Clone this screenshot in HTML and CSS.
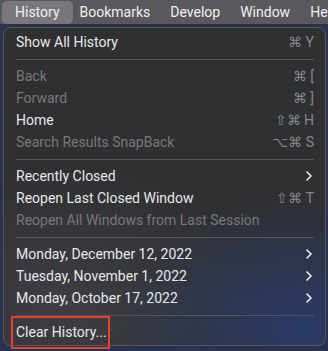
FILE: index.html
```html
<!DOCTYPE html>
<html lang="en">
  <head>
    <meta charset="UTF-8" />
    <title>History menu</title>
    <link rel="stylesheet" href="styles.css">
  </head>
  <body>
    <div class="menubar">
      <span class="top active">History</span>
      <span class="top">Bookmarks</span>
      <span class="top">Develop</span>
      <span class="top">Window</span>
      <span class="top">Help</span>
    </div>
    <div class="desk">
      <div class="menu">
        <div class="item"><span>Show All History</span><span class="key">⌘ Y</span></div>
        <div class="sep"></div>
        <div class="item off"><span>Back</span><span class="key">⌘ [</span></div>
        <div class="item off"><span>Forward</span><span class="key">⌘ ]</span></div>
        <div class="item"><span>Home</span><span class="key">⇧⌘ H</span></div>
        <div class="item off"><span>Search Results SnapBack</span><span class="key">⌥⌘ S</span></div>
        <div class="sep"></div>
        <div class="item"><span>Recently Closed</span><svg class="arrow" viewBox="0 0 6 10"><path d="M1 1l4 4-4 4"/></svg></div>
        <div class="item"><span>Reopen Last Closed Window</span><span class="key">⇧⌘ T</span></div>
        <div class="item off"><span>Reopen All Windows from Last Session</span></div>
        <div class="sep"></div>
        <div class="item"><span>Monday, December 12, 2022</span><svg class="arrow" viewBox="0 0 6 10"><path d="M1 1l4 4-4 4"/></svg></div>
        <div class="item"><span>Tuesday, November 1, 2022</span><svg class="arrow" viewBox="0 0 6 10"><path d="M1 1l4 4-4 4"/></svg></div>
        <div class="item"><span>Monday, October 17, 2022</span><svg class="arrow" viewBox="0 0 6 10"><path d="M1 1l4 4-4 4"/></svg></div>
        <div class="sep"></div>
        <div class="item"><span class="mark">Clear History...</span></div>
      </div>
    </div>
  </body>
</html>
```

FILE: styles.css
```css
html, body {
  margin: 0;
  height: 100%;
}
body {
  font-family: Roboto, "Liberation Sans", sans-serif;
  font-size: 14px;
  background: #2a3250;
  overflow: hidden;
}
.menubar {
  height: 24px;
  display: flex;
  align-items: center;
  background: #59595d;
  color: #f0f0f0;
  padding-left: 2px;
  white-space: nowrap;
  overflow: hidden;
}
.top {
  padding: 0 10px;
  height: 23px;
  line-height: 23px;
  border-radius: 5px;
  flex: none;
}
.top.active {
  background: #78787c;
  padding: 0 13px;
  margin-right: -3px;
}
.desk {
  padding: 3px 2px 0 3px;
}
.menu {
  border: 1px solid #55565a;
  border-radius: 8px;
  padding: 3px 0 2px;
  background:
    radial-gradient(ellipse 190px 130px at 300px 300px, #2b3a68 0%, rgba(43, 58, 104, 0) 100%),
    radial-gradient(ellipse 200px 140px at 60px 280px, #3c3e42 0%, rgba(60, 62, 66, 0) 100%),
    #2f3032;
  color: #e8e8e8;
}
.item {
  display: flex;
  justify-content: space-between;
  align-items: center;
  height: 22px;
  padding: 0 11px 0 12px;
}
.item.off {
  color: #78787b;
}
.key {
  color: #86868a;
  font-size: 14px;
}
.arrow {
  width: 6px;
  height: 10px;
  margin-right: 2px;
  fill: none;
  stroke: #e8e8e8;
  stroke-width: 1.7;
  stroke-linecap: round;
  stroke-linejoin: round;
}
.sep {
  height: 1px;
  margin: 6px 11px 5px 12px;
  background: #55565a;
}
.mark {
  position: relative;
}
.mark::after {
  content: "";
  position: absolute;
  left: -5px;
  right: -3px;
  top: -8px;
  bottom: -9px;
  border: 2px solid #e8412b;
}
```
